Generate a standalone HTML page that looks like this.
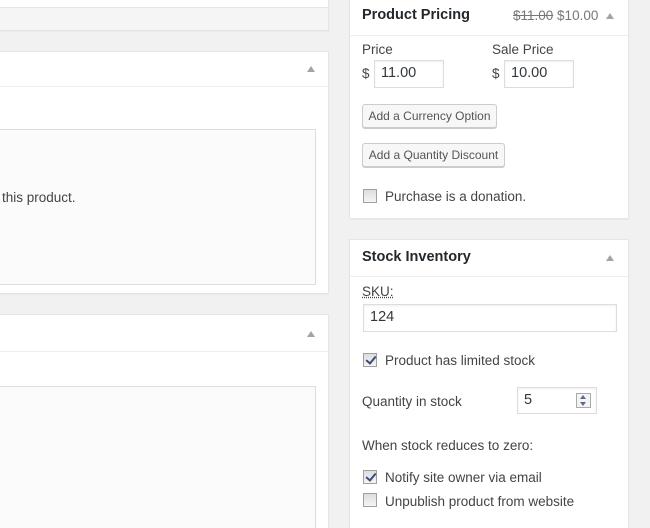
<!DOCTYPE html>
<html><head><style>
*{box-sizing:border-box;margin:0;padding:0}
html,body{width:650px;height:528px;overflow:hidden}
body{background:#f1f1f1;position:relative;font-family:"Liberation Sans",sans-serif;font-size:13.5px;color:#444}
.a{position:absolute}
.panel{position:absolute;background:#fff;border:1px solid #e5e5e5;box-shadow:0 1px 1px rgba(0,0,0,.04)}
.hline{position:absolute;left:0;right:0;height:1px;background:#eee}
.arrow{position:absolute;width:0;height:0;border-left:4px solid transparent;border-right:4px solid transparent;border-bottom:6px solid #a0a5aa}
.box{position:absolute;background:#fbfbfb;border:1px solid #ddd}
.inp{position:absolute;background:#fff;border:1px solid #ddd;box-shadow:inset 0 1px 2px rgba(0,0,0,.07);font-size:14.5px;color:#32373c;padding-left:6px;line-height:25px}
.btn{position:absolute;background:#f7f7f7;border:1px solid #ccc;border-radius:3px;box-shadow:0 1px 0 #ccc;font-size:12px;color:#555;text-align:center;line-height:22px}
.cb{position:absolute;width:14px;height:14px;border:1px solid #a0a0a0;background:linear-gradient(#ddd,#f4f4f4)}
.cb.on::after{content:"";position:absolute;left:4px;top:0px;width:4px;height:8px;border:solid #3b4a7a;border-width:0 2px 2px 0;transform:rotate(40deg)}
.t{position:absolute;white-space:nowrap;line-height:16px}
h3{position:absolute;font-size:14.5px;font-weight:bold;color:#23282d;white-space:nowrap}
</style></head><body>
<div class="panel" style="left:-5px;top:-5px;width:334px;height:36px;background:#f5f5f5"><div style="position:absolute;left:0;right:0;top:0;height:12px;background:#fff;border-bottom:1px solid #e5e5e5"></div></div>
<div class="panel" style="left:-5px;top:51px;width:334px;height:243px"><div class="hline" style="top:34px"></div><div class="arrow" style="left:311px;top:14px"></div></div>
<div class="box" style="left:-5px;top:129px;width:321px;height:156px"></div>
<div class="t" style="left:2px;top:190px">this product.</div>
<div class="panel" style="left:-5px;top:314px;width:334px;height:230px"><div class="hline" style="top:36px"></div><div class="arrow" style="left:311px;top:16px"></div></div>
<div class="box" style="left:-5px;top:386px;width:321px;height:160px"></div>

<div class="panel" style="left:349px;top:-5px;width:280px;height:224px"><div class="hline" style="top:39px"></div><div class="arrow" style="left:256px;top:17px"></div></div>
<h3 style="left:362px;top:7px">Product Pricing</h3>
<div class="t" style="left:513px;top:8px;color:#777"><s>$11.00</s> $10.00</div>
<div class="t" style="left:362px;top:42px">Price</div>
<div class="t" style="left:362px;top:66px">$</div>
<div class="inp" style="left:374px;top:60px;width:70px;height:28px">11.00</div>
<div class="t" style="left:492px;top:42px">Sale Price</div>
<div class="t" style="left:492px;top:66px">$</div>
<div class="inp" style="left:504px;top:60px;width:70px;height:28px">10.00</div>
<div class="btn" style="left:362px;top:104px;width:135px;height:24px">Add a Currency Option</div>
<div class="btn" style="left:362px;top:143px;width:143px;height:24px">Add a Quantity Discount</div>
<div class="cb" style="left:363px;top:189px"></div>
<div class="t" style="left:385px;top:189px">Purchase is a donation.</div>

<div class="panel" style="left:349px;top:239px;width:280px;height:300px"><div class="hline" style="top:36px"></div><div class="arrow" style="left:256px;top:15px"></div></div>
<h3 style="left:362px;top:249px">Stock Inventory</h3>
<div class="t" style="left:362px;top:284px;text-decoration:underline dotted">SKU:</div>
<div class="inp" style="left:363px;top:304px;width:254px;height:28px">124</div>
<div class="cb on" style="left:363px;top:353px"></div>
<div class="t" style="left:385px;top:353px">Product has limited stock</div>
<div class="t" style="left:362px;top:394px">Quantity in stock</div>
<div class="inp" style="left:517px;top:387px;width:80px;height:27px">5</div>
<div class="a" style="left:576px;top:393px;width:15px;height:15px;border:1px solid #aaa;background:#f4f4f4"><div class="a" style="left:3px;top:1px;border-left:3px solid transparent;border-right:3px solid transparent;border-bottom:4px solid #5a6a8a"></div><div class="a" style="left:3px;top:8px;border-left:3px solid transparent;border-right:3px solid transparent;border-top:4px solid #5a6a8a"></div></div>
<div class="t" style="left:362px;top:438px">When stock reduces to zero:</div>
<div class="cb on" style="left:363px;top:470px"></div>
<div class="t" style="left:385px;top:470px">Notify site owner via email</div>
<div class="cb" style="left:363px;top:493px"></div>
<div class="t" style="left:385px;top:494px">Unpublish product from website</div>
</body></html>
